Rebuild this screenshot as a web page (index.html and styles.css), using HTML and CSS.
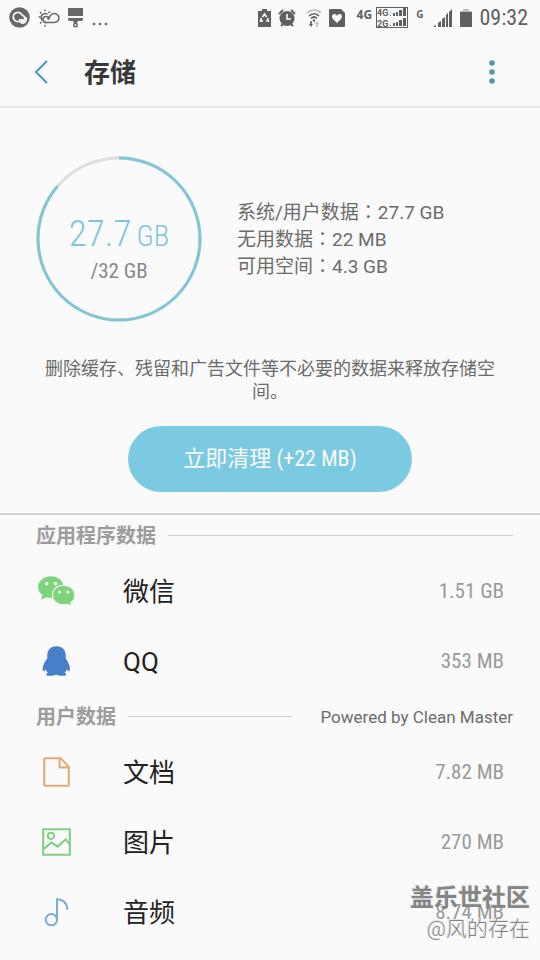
FILE: index.html
```html
<!DOCTYPE html>
<html lang="zh-CN">
<head>
<meta charset="utf-8">
<meta name="viewport" content="width=device-width, initial-scale=1">
<title>存储</title>
<link rel="stylesheet" href="styles.css">
</head>
<body>
<div class="status-bar">
  <div class="status-left">
    <svg width="22" height="22" viewBox="0 0 22 22"><circle cx="10.500" cy="10.500" r="10.300" fill="#686868"/><path d="M10 14.500A4.600 4.600 0 1 1 13 8" fill="none" stroke="#fafafa" stroke-width="1.800"/><path d="M13 8q3 1 3 4l2-1M11 12c-1 4 3 5 5 3 1.500-1.500 1-3 0-4" fill="none" stroke="#fafafa" stroke-width="1.800"/><circle cx="13.500" cy="13.500" r="1.800" fill="#fafafa"/></svg>
    <svg width="22" height="18" viewBox="0 0 22 18"><g fill="none" stroke="#686868" stroke-width="1.600" stroke-linecap="round"><path d="M8 13.500h8.500a4.500 4.500 0 1 0-3.500-7.500c-1 1-2 2.500-3 4"/><path d="M8 13.500a3 3 0 1 1 3-3.500"/><path d="M4 11A4 4 0 0 1 9 5"/><path d="M7 1v.5M2.500 3.500l.5.500M11.500 3l-.5.500M1 8h.5M2.500 14l.5-.5M7 16.500v.5"/></g></svg>
    <svg width="18" height="20" viewBox="0 0 18 20" fill="#686868"><path d="M1 0h15v8H1zM1 10h15v1c0 1-1 2-2 2h-3l-1 2v4H7v-4l-1-2H3c-1 0-2-1-2-2z"/><circle cx="8.500" cy="17" r="2.500"/><circle cx="8.500" cy="17" r="1" fill="#fafafa"/></svg>
    <svg width="16" height="18" viewBox="0 0 16 18" fill="#686868"><circle cx="2" cy="15" r="1.300"/><circle cx="8" cy="15" r="1.300"/><circle cx="14" cy="15" r="1.300"/></svg>
  </div>
  <div class="status-right">
    <svg width="13" height="18" viewBox="0 0 13 18"><path d="M0 2h4V0h5v2h4v16H0z" fill="#606060"/><path d="M4.500 8l2-3 2 3M9.500 9l1 3H8m-3 0H2.500l1-3" fill="none" stroke="#fafafa" stroke-width="1.600"/></svg>
    <svg width="18" height="18" viewBox="0 0 18 18"><circle cx="9" cy="9.500" r="7.500" fill="#606060"/><path d="M1 5l4-4M17 5l-4-4M3 17l2-2M15 17l-2-2" stroke="#606060" stroke-width="2"/><path d="M9 5v5h4" fill="none" stroke="#fafafa" stroke-width="1.600"/></svg>
    <svg class="wifi" width="16" height="18" viewBox="0 0 16 18" fill="none" stroke-width="1.700"><path d="M1 4c4-4 10-4 14 0" stroke="#bdbdbd"/><path d="M3 7c3-3 7-3 10 0M5 9.500c2-2 4-2 6 0" stroke="#606060"/><circle cx="8" cy="11.500" r="1.200" fill="#606060"/><path d="M5 12v4" stroke="#606060"/><path d="M3 15h4l-2 3z" fill="#606060"/><path d="M11 18v-4" stroke="#bdbdbd"/><path d="M9 15h4l-2-3z" fill="#bdbdbd"/></svg>
    <svg width="16" height="18" viewBox="0 0 16 18"><path d="M1 0h11l4 4v13q0 1-1 1H1q-1 0-1-1V1q0-1 1-1z" fill="#606060"/><path d="M8 14L4 10c-3-4 2-7 4-3 2-4 7-1 4 3z" fill="#fafafa"/></svg>
    <span class="net net-4g">4G</span>
    <svg class="dual" width="33" height="22" viewBox="0 0 33 22"><rect x=".5" y=".5" width="31" height="20" fill="none" stroke="#606060"/><g fill="#606060"><text x="1" y="9" class="dual-text">4G</text><text x="1" y="20" class="dual-text">2G</text><path d="M14 9h1v-1h-1zM17 9h2V6h-2zM20 9h2V5h-2zM23 9h3V3h-3zM27 9h3V1h-3zM14 19h1v-1h-1zM17 19h2v-3h-2zM20 19h2v-4h-2zM23 19h3v-6h-3zM27 19h3v-8h-3z"/></g></svg>
    <span class="net net-g">G</span>
    <svg width="19" height="18" viewBox="0 0 19 18" fill="#606060"><path d="M0 18v-1l2-1v2zM4 18v-4l3-2v6zM8 18v-8l3-2v10zM12 18V6l2-2v14zM15 18V3l3-3v18z"/></svg>
    <svg width="12" height="18" viewBox="0 0 12 18"><path d="M3 0h6v2h3v1H0V2h3z" fill="#bdbdbd"/><path d="M0 3h12v15H0z" fill="#606060"/></svg>
    <time class="clock">09:32</time>
  </div>
</div>

<header class="app-bar">
  <button class="icon-button" type="button" aria-label="返回"><svg width="16" height="26" viewBox="0 0 16 26"><path d="M14 2L3 13l11 11" fill="none" stroke="#5296ad" stroke-width="2"/></svg></button>
  <h1 class="title">存储</h1>
  <button class="icon-button" type="button" aria-label="更多选项"><svg width="6" height="26" viewBox="0 0 6 26" fill="#5296ad"><circle cx="3" cy="4" r="2.800"/><circle cx="3" cy="13" r="2.800"/><circle cx="3" cy="22" r="2.800"/></svg></button>
</header>

<main>
  <section class="summary">
    <div class="usage">
      <div class="gauge">
        <svg class="gauge-ring" width="166" height="166" viewBox="0 0 166 166" fill="none" stroke-width="3"><circle cx="83" cy="83" r="81" stroke="#dedede"/><circle cx="83" cy="83" r="81" stroke="#82c6d6" pathLength="100" stroke-dasharray="86.300 13.700" transform="rotate(-90 83 83)"/></svg>
        <div class="gauge-label">
          <div class="used"><span>27.7</span><span class="used-unit">GB</span></div>
          <div class="total">/32 GB</div>
        </div>
      </div>
      <ul class="details">
        <li>系统/用户数据<span class="colon" lang="zh-TW">：</span>27.7 GB</li>
        <li>无用数据<span class="colon" lang="zh-TW">：</span>22 MB</li>
        <li>可用空间<span class="colon" lang="zh-TW">：</span>4.3 GB</li>
      </ul>
    </div>
    <p class="hint">删除缓存、残留和广告文件等不必要的数据来释放存储空间。</p>
    <button class="clean" type="button">立即清理 (+22 MB)</button>
  </section>

  <section>
    <div class="section-head"><h2>应用程序数据</h2><span class="rule"></span></div>
    <ul class="list">
      <li class="row">
        <svg class="row-icon" viewBox="0 0 40 40" fill="#7dd47c"><path d="M15 5C8 5 2 9.500 2 15.500c0 4 2.200 6.500 4.500 8L5 28l5-2.500c1.600.5 3.300.6 5 .5 7-.3 12-5 12-10.500S22 5 15 5z"/><path d="M27 14c-6.500 0-11 4-11 9.500S20.500 33 27 33c1.500 0 3-.3 4-.6l4 2-1-3.400c2.500-2 4-4.300 4-7.500 0-5.500-4.500-9.500-11-9.500z" stroke="#fafafa"/><g fill="#fafafa"><circle cx="10.500" cy="12.500" r="1.700"/><circle cx="19" cy="12.500" r="1.700"/><circle cx="23" cy="20.500" r="1.500"/><circle cx="31" cy="20.500" r="1.500"/></g></svg>
        <span class="name">微信</span><span class="size">1.51 GB</span>
      </li>
      <li class="row">
        <svg class="row-icon" viewBox="0 0 40 40" fill="#477fca"><path d="M20 5c-6 0-9 4-9 9v3c-3 4-5 8-4.500 11.500.4 1.500 2 .5 3-1 .4 1.500 1 2.500 2 3.500-3 2-1 3 2 3 2.500 0 4.500-.4 6-1.400 1.500 1 4 1.400 6.500 1.400 3 0 5-1 2-3 1-1 1.600-2 2-3.500 1 1.500 2.600 2.500 3 1C33.500 25 32 21 29 17v-3c0-5-3-9-9-9z"/></svg>
        <span class="name">QQ</span><span class="size">353 MB</span>
      </li>
    </ul>
  </section>

  <section>
    <div class="section-head"><h2>用户数据</h2><span class="rule"></span><span class="powered">Powered by Clean Master</span></div>
    <ul class="list">
      <li class="row">
        <svg class="row-icon" viewBox="0 0 40 40" fill="none" stroke="#e0ab77" stroke-width="2" stroke-linejoin="round"><path d="M9 6h15l8 8.500V32q0 1-1 1H9q-1 0-1-1V7q0-1 1-1z"/><path d="M23 6v9h9"/></svg>
        <span class="name">文档</span><span class="size">7.82 MB</span>
      </li>
      <li class="row">
        <svg class="row-icon" viewBox="0 0 40 40" fill="none" stroke="#81ce85" stroke-width="2"><path d="M7 7h26v25H7z"/><circle cx="14.500" cy="13.500" r="3"/><path d="M8 26l7-6 6 4 8-7 4 5"/></svg>
        <span class="name">图片</span><span class="size">270 MB</span>
      </li>
      <li class="row">
        <svg class="row-icon" viewBox="0 0 40 40" fill="none" stroke="#79afd2" stroke-width="2"><circle cx="15" cy="27" r="5.500"/><path d="M20.500 27V7c6 0 10 4 10 10"/></svg>
        <span class="name">音频</span><span class="size">8.74 MB</span>
      </li>
    </ul>
  </section>
</main>
<div class="watermark"><strong>盖乐世社区</strong><span>@风的存在</span></div>
</body>
</html>
```
FILE: styles.css
```css
* {
  box-sizing: border-box;
}

body {
  margin: 0;
  min-height: 100vh;
  position: relative;
  background: #fafafa;
  color: #6b6b6b;
  font-family: Roboto, "Noto Sans CJK SC", sans-serif;
}

h1, h2, p, ul {
  margin: 0;
  padding: 0;
}

ul {
  list-style: none;
}

svg {
  display: block;
  flex: none;
}

button {
  border: 0;
  padding: 0;
  font: inherit;
  background: none;
  cursor: pointer;
}

.status-bar {
  height: 36px;
  padding: 0 12px 0 9px;
  display: flex;
  align-items: center;
  justify-content: space-between;
}

.status-left, .status-right {
  display: flex;
  align-items: center;
  gap: 7px;
}

.wifi {
  margin-left: 3px;
}

.net {
  font: bold 12px "Noto Sans", sans-serif;
  color: #606060;
  margin-bottom: 8px;
}

.net-4g {
  margin-left: 5px;
  margin-right: -3px;
}

.net-g {
  font-size: 10px;
  margin-right: 4px;
}

.dual-text {
  font: bold 9px Roboto, sans-serif;
}

.clock {
  font: 22px/24px "Roboto Condensed", Roboto, sans-serif;
  color: #606060;
}

.app-bar {
  height: 72px;
  padding: 2px 39px 0 32px;
  display: flex;
  align-items: center;
  border-bottom: 2px solid #e6e6e6;
}

.icon-button {
  min-width: 18px;
  height: 48px;
  display: grid;
  place-items: center;
}

.title {
  flex: 1;
  padding: 2px 0 0 34px;
  font-size: 26px;
  line-height: 36px;
  font-weight: bold;
  color: #383838;
}

.summary {
  padding: 48px 36px 21px;
  border-bottom: 2px solid #d2d2d2;
  display: flex;
  flex-direction: column;
  align-items: center;
}

.usage {
  align-self: stretch;
  display: flex;
  align-items: center;
  gap: 35px;
}

.gauge {
  display: grid;
  place-items: center;
}

.gauge-ring, .gauge-label {
  grid-area: 1 / 1;
}

.gauge-label {
  padding-top: 20px;
  text-align: center;
  font-family: "Roboto Condensed", Roboto, sans-serif;
}

.used {
  display: flex;
  align-items: baseline;
  gap: 5px;
  font-size: 37px;
  font-weight: 300;
  line-height: 42px;
  color: #82c6d6;
}

.used-unit {
  font-size: 29px;
}

.total {
  font-size: 21px;
  line-height: 28px;
  color: #888888;
}

.details {
  font-size: 19px;
  line-height: 27px;
}

.colon {
  font-family: "Noto Sans CJK TC", sans-serif;
  line-height: 1;
}

.hint {
  margin-top: 35px;
  font-size: 18px;
  line-height: 23px;
  text-align: center;
}

.clean {
  margin-top: 23px;
  width: 284px;
  height: 66px;
  border-radius: 33px;
  background: #7ccae2;
  color: #fafafa;
  font: 22px/32px "Roboto Condensed", Roboto, "Noto Sans CJK SC", sans-serif;
}

.section-head {
  height: 41px;
  padding: 0 27px 0 36px;
  display: flex;
  align-items: center;
}

.section-head h2 {
  font-size: 20px;
  line-height: 28px;
  font-weight: bold;
  color: #9c9c9c;
}

.rule {
  flex: 1;
  height: 1px;
  margin-left: 12px;
  background: #cfcfcf;
}

.powered {
  margin-left: 27px;
  font-size: 17px;
  line-height: 24px;
}

.row {
  height: 70px;
  padding: 0 36px;
  display: flex;
  align-items: center;
}

.row-icon {
  width: 41px;
  height: 41px;
}

.name {
  flex: 1;
  padding: 2px 0 0 46px;
  font-size: 26px;
  line-height: 36px;
  color: #222222;
}

.size {
  font: 21px/30px "Roboto Condensed", Roboto, sans-serif;
  color: #999999;
}

.watermark {
  position: absolute;
  right: 10px;
  bottom: 16px;
  display: flex;
  flex-direction: column;
  align-items: flex-end;
  color: #858585;
  text-shadow: -1px -1px #e4e4e4;
}

.watermark strong {
  font-size: 24px;
  line-height: 32px;
}

.watermark span {
  font-size: 21px;
  line-height: 30px;
  font-weight: 300;
}
```
